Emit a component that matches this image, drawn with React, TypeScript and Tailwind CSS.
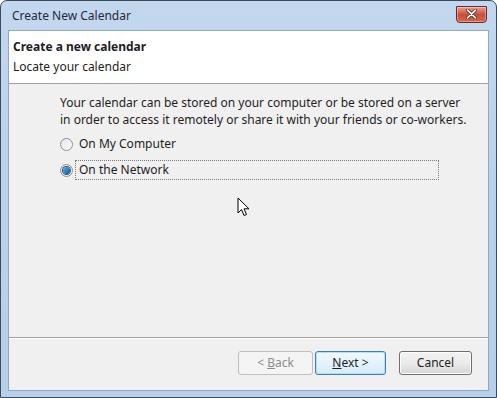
import React from 'react';

const font = { fontFamily: '"Noto Sans", "Open Sans", Arial, sans-serif' };

function Radio({ checked }: { checked?: boolean }) {
  return (
    <span className="relative flex h-[13px] w-[13px] shrink-0 items-center justify-center rounded-full border border-[#8e8f8f] bg-gradient-to-br from-[#e6e6e6] to-[#fbfbfb]">
      {checked && (
        <span className="h-[7px] w-[7px] rounded-full bg-gradient-to-br from-[#5fb4e6] to-[#0f4f8a] shadow-[0_0_0_1px_#1f4f80]" />
      )}
    </span>
  );
}

export default function App() {
  return (
    <div
      className="relative h-[398px] w-[497px] overflow-hidden rounded-t-[7px] border border-[#3c4a5c] bg-gradient-to-b from-[#c3d8ef] via-[#bad1eb] to-[#b7cfe9] text-[12px] text-[#1e1e1e]"
      style={font}
    >
      {/* title bar */}
      <div className="flex h-[29px] items-center justify-between pl-[11px] pr-[9px]">
        <span className="text-[12px] text-[#1e2a3a]">Create New Calendar</span>
        <div className="mb-[3px] flex h-[17px] w-[31px] items-center justify-center rounded-b-[4px] border border-[#6b2a22] bg-gradient-to-b from-[#e8a093] via-[#c8503a] to-[#d9654b] shadow-[inset_0_0_0_1px_rgba(255,255,255,0.35)]">
          <svg width="11" height="10" viewBox="0 0 11 10">
            <path d="M1.5 1.2 L9.5 8.8 M9.5 1.2 L1.5 8.8" stroke="#4a1a14" strokeWidth="3.2" strokeLinecap="round" />
            <path d="M1.5 1.2 L9.5 8.8 M9.5 1.2 L1.5 8.8" stroke="#ffffff" strokeWidth="1.8" strokeLinecap="round" />
          </svg>
        </div>
      </div>

      {/* client area */}
      <div className="mx-[7px] flex h-[361px] flex-col border border-[#8ea8c6] bg-[#f0f0f0]">
        {/* header */}
        <div className="flex h-[53px] flex-col justify-center border-b border-[#a0a0a0] bg-white pb-[1px] pl-[4px]">
          <div className="font-bold leading-[20px]">Create a new calendar</div>
          <div className="leading-[20px]">Locate your calendar</div>
        </div>

        {/* body */}
        <div className="flex flex-1 flex-col pl-[51px] pt-[10px]">
          <p className="leading-[17px]">
            Your calendar can be stored on your computer or be stored on a server
            <br />
            in order to access it remotely or share it with your friends or co-workers.
          </p>
          <div className="mt-[6px] flex h-[20px] items-center">
            <Radio />
            <span className="ml-[4px] px-[2px]">On My Computer</span>
          </div>
          <div className="mt-[6px] flex h-[20px] items-center">
            <Radio checked />
            <span className="ml-[2px] flex h-[20px] w-[364px] items-center border border-dotted border-[#7a7a7a] px-[3px]">
              On the Network
            </span>
          </div>
        </div>

        {/* footer */}
        <div className="flex h-[53px] items-start border-t border-[#a0a0a0] pt-[13px] shadow-[inset_0_1px_0_#ffffff]">
          <div className="ml-[229px] flex">
            <button className="h-[24px] w-[75px] rounded-[3px] border border-[#bfbfbf] bg-[#f4f4f4] text-[#8d8d8d]">
              &lt; <span className="underline">B</span>ack
            </button>
            <button className="ml-[2px] h-[24px] w-[71px] rounded-[3px] border border-[#3c7fb1] bg-gradient-to-b from-[#f2f9fd] to-[#d6ebf8] shadow-[inset_0_0_0_1px_#b4e0f7]">
              <span className="underline">N</span>ext &gt;
            </button>
            <button className="ml-[13px] h-[24px] w-[73px] rounded-[3px] border border-[#707070] bg-gradient-to-b from-[#f2f2f2] via-[#ebebeb] to-[#d6d6d6] shadow-[inset_0_0_0_1px_#fcfcfc]">
              Cancel
            </button>
          </div>
        </div>
      </div>

      {/* mouse cursor */}
      <svg className="absolute left-[236px] top-[196px]" width="14" height="22" viewBox="0 0 14 22">
        <path d="M1 1 L1 16 L4.5 12.5 L7 18.5 L9.5 17.5 L7 11.8 L12 11.8 Z" fill="#ffffff" stroke="#000000" strokeWidth="1" strokeLinejoin="round" />
      </svg>
    </div>
  );
}
